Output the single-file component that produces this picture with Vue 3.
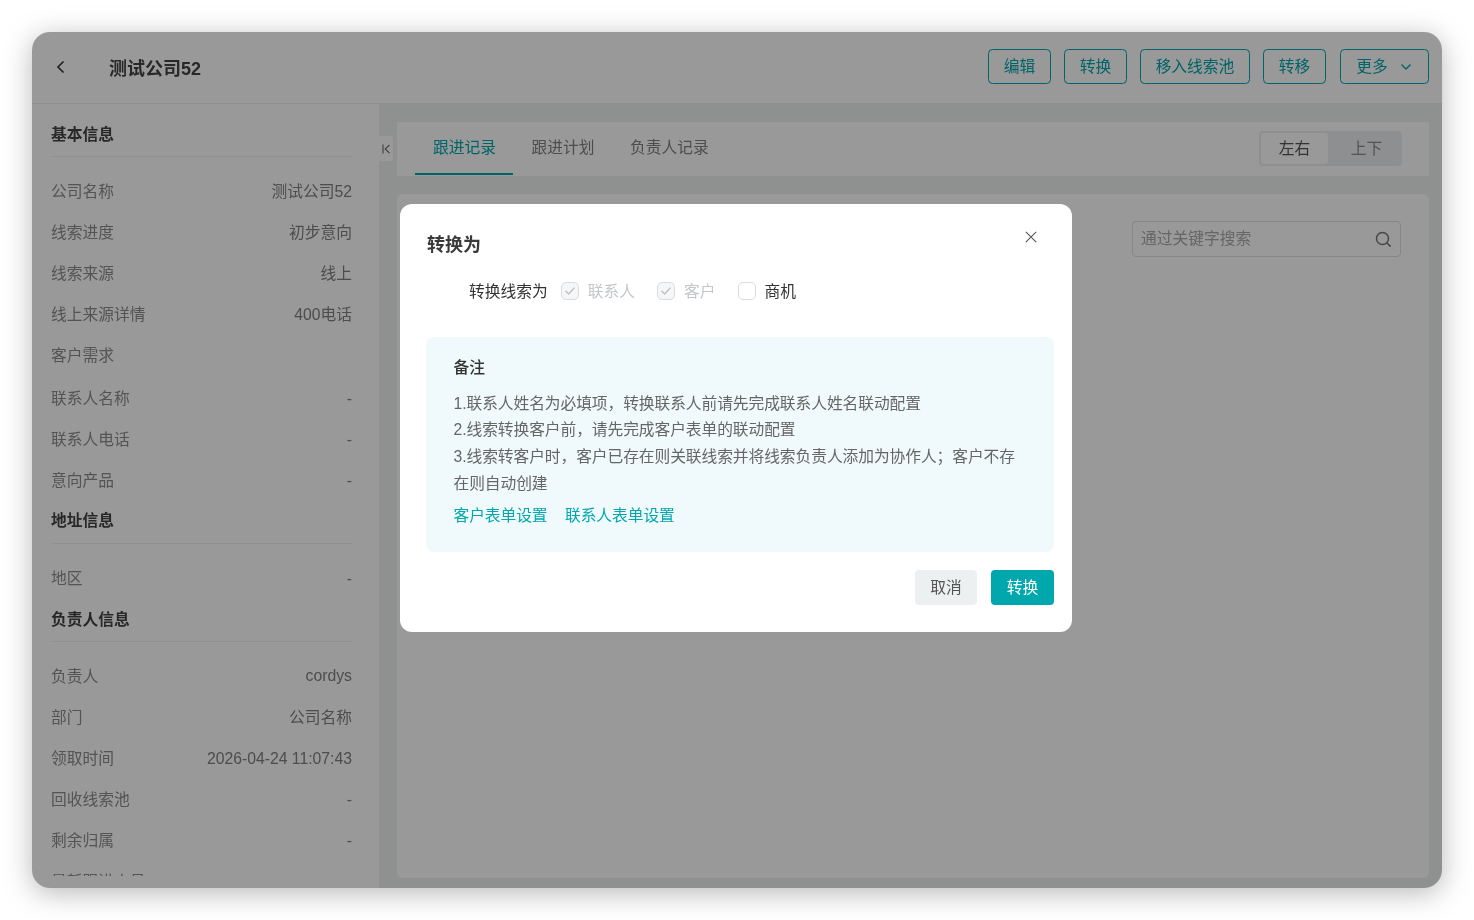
<script setup>
const sections = [
  { title: '基本信息', rows: [
    ['公司名称', '测试公司52'], ['线索进度', '初步意向'], ['线索来源', '线上'], ['线上来源详情', '400电话'],
    ['客户需求', '', true], ['联系人名称', '-'], ['联系人电话', '-'], ['意向产品', '-'] ] },
  { title: '地址信息', rows: [['地区', '-']] },
  { title: '负责人信息', rows: [
    ['负责人', 'cordys'], ['部门', '公司名称'], ['领取时间', '2026-04-24 11:07:43'], ['回收线索池', '-'], ['剩余归属', '-'], ['最新跟进人员', ''] ] }
]
const actions = ['编辑', '转换', '移入线索池', '转移']
const tabs = ['跟进记录', '跟进计划', '负责人记录']
const checks = [
  { label: '联系人', checked: true, disabled: true },
  { label: '客户', checked: true, disabled: true },
  { label: '商机', checked: false, disabled: false }
]
const notes = [
  '1.联系人姓名为必填项，转换联系人前请先完成联系人姓名联动配置',
  '2.线索转换客户前，请先完成客户表单的联动配置',
  '3.线索转客户时，客户已存在则关联线索并将线索负责人添加为协作人；客户不存在则自动创建'
]
const isLatin = (v) => /^[-\d: ]+$/.test(v)
</script>

<template>
  <div class="page">
    <div class="window">
      <header class="header">
        <svg class="back" width="10" height="16" viewBox="0 0 10 16" fill="none"><path d="M7.5 2.5 2 8l5.5 5.5" stroke="#3a3a3a" stroke-width="1.7"/></svg>
        <h1 class="name">测试公司52</h1>
        <div class="actions">
          <button v-for="a in actions" :key="a" class="ghost"><span class="cap">{{ a }}</span></button>
          <button class="ghost more"><span class="cap">更多</span>
            <svg width="12" height="8" viewBox="0 0 12 8" fill="none"><path d="M1.5 1.5 6 6l4.5-4.5" stroke="#00a7ad" stroke-width="1.4"/></svg>
          </button>
        </div>
      </header>
      <div class="content">
        <aside class="side">
          <div class="side-scroll">
            <section v-for="s in sections" :key="s.title">
              <div class="sec-title">{{ s.title }}</div>
              <div v-for="r in s.rows" :key="r[0]" class="row" :class="{ tall: r[2] }">
                <span class="lbl">{{ r[0] }}</span>
                <span class="val" :class="{ latin: isLatin(r[1]) }">{{ r[1] }}</span>
              </div>
            </section>
          </div>
        </aside>
        <main class="main">
          <div class="collapse">
            <svg width="9" height="10" viewBox="0 0 9 10" fill="none"><path d="M1 .5v9M7.5 .8 3.2 5l4.3 4.2" stroke="#666" stroke-width="1.1"/></svg>
          </div>
          <div class="tabbar">
            <div class="tabs">
              <div v-for="(t, i) in tabs" :key="t" class="tab" :class="{ active: i === 0 }">{{ t }}</div>
            </div>
            <div class="seg">
              <div class="seg-item on">左右</div>
              <div class="seg-item">上下</div>
            </div>
          </div>
          <div class="panel">
            <div class="search">
              <span class="ph">通过关键字搜索</span>
              <svg width="17" height="17" viewBox="0 0 17 17" fill="none"><circle cx="7.5" cy="7.5" r="6" stroke="#777" stroke-width="1.5"/><path d="m11.8 11.8 3.8 3.8" stroke="#777" stroke-width="1.5"/></svg>
            </div>
          </div>
        </main>
      </div>

      <div class="mask">
        <div class="modal">
          <svg class="close" width="12" height="12" viewBox="0 0 12 12" fill="none"><path d="m.8.8 10.4 10.4M11.2.8.8 11.2" stroke="#555" stroke-width="1.1"/></svg>
          <h2 class="m-title">转换为</h2>
          <div class="m-form">
            <span class="m-label">转换线索为</span>
            <label v-for="c in checks" :key="c.label" class="check" :class="{ off: c.disabled }">
              <span class="box">
                <svg v-if="c.checked" width="12" height="10" viewBox="0 0 12 10" fill="none"><path d="m1.5 5 3.2 3 5.8-6.3" stroke="#b5b8bd" stroke-width="1.2"/></svg>
              </span>
              <span class="check-text">{{ c.label }}</span>
            </label>
          </div>
          <div class="note">
            <div class="note-title">备注</div>
            <p v-for="n in notes" :key="n" class="note-line">{{ n }}</p>
            <div class="links"><span>客户表单设置</span><span>联系人表单设置</span></div>
          </div>
          <div class="m-foot">
            <button class="btn cancel"><span class="cap">取消</span></button>
            <button class="btn primary"><span class="cap">转换</span></button>
          </div>
        </div>
      </div>
    </div>
  </div>
</template>

<style>
html, body { margin: 0; background: #fff; }
</style>

<style scoped>
.page {
  width: 1474px; height: 920px; box-sizing: border-box; padding: 32px;
  font-family: "Liberation Sans", "Noto Sans CJK SC", sans-serif; font-size: 15.75px; color: #333;
  overflow: hidden;
  filter: drop-shadow(0 5px 14px rgba(0,0,0,.28));
}
.window {
  position: relative; height: 856px; background: #fff; border-radius: 18px; overflow: hidden;
  display: flex; flex-direction: column;
}
.header {
  height: 71px; flex: none; display: flex; align-items: center; padding: 0 13px 0 23.5px;
  border-bottom: 1px solid #ecedef;
}
.back { margin-top: -2px; }
.name { margin: 2px 0 0 43.5px; font-size: 18px; font-weight: 700; line-height: 24px; color: #444; }
.actions { margin-left: auto; display: flex; gap: 13px; margin-top: -2px; }
button { font: inherit; cursor: pointer; }
.cap { display: block; margin-top: -2px; }
.ghost {
  height: 35.5px; width: 63px; padding: 0; box-sizing: border-box; background: #fff; color: #00a7ad;
  border: 1.1px solid #00a7ad; border-radius: 4.5px; display: flex; align-items: center; justify-content: center; white-space: nowrap;
}
.ghost:nth-child(3) { width: 110px; }
.ghost.more { width: 89px; gap: 12px; padding-right: 1px; margin-left: 1px; }
.content { flex: 1; min-height: 0; display: flex; }
.side { width: 347px; flex: none; box-sizing: border-box; padding: 0 27px 12px 19px; overflow: hidden; }
.side-scroll { height: 100%; overflow: hidden; padding-top: 10px; box-sizing: border-box; }
.sec-title {
  padding: 9px 0 9px; line-height: 24px; font-weight: 700; color: #444; border-bottom: 1px solid #eceef0;
  margin-bottom: 13px;
}
.row { height: 41px; display: flex; justify-content: space-between; align-items: center; }
.row.tall { height: 43px; align-items: flex-start; padding-top: 9px; box-sizing: border-box; }
section:nth-child(2) .sec-title { margin-top: 9px; padding: 0 0 10px; }
section:nth-child(3) .sec-title { margin-top: 10px; padding: 0 0 9px; }
.lbl { color: #8c8c8c; }
.val { color: #808080; }
.val.latin { margin-top: 2px; }
.main {
  position: relative; flex: 1; min-width: 0; background: #eff0f1; padding: 18px 13px 10px 18px;
  box-sizing: border-box; display: flex; flex-direction: column; gap: 18px;
}
.collapse {
  position: absolute; left: 0; top: 32px; width: 14px; height: 25px; background: #fff;
  border-radius: 0 3px 3px 0; display: flex; align-items: center; justify-content: center;
}
.tabbar { height: 54px; flex: none; background: #fff; display: flex; align-items: center; padding: 0 27px 0 18.25px; }
.tabs { display: flex; height: 100%; }
.tab {
  position: relative; padding: 0 17.75px 5px; height: 100%; box-sizing: border-box;
  display: flex; align-items: center; color: #808080;
}
.tab.active { color: #00a7ad; }
.tab.active::after { content: ""; position: absolute; left: 0; right: .5px; bottom: 1px; height: 2px; background: #00a7ad; }
.seg { margin-left: auto; margin-top: -1px; display: flex; width: 143px; height: 35px; box-sizing: border-box; padding: 2px; background: #eceef0; border-radius: 4px; }
.seg-item { width: 72px; display: flex; align-items: center; justify-content: center; color: #8c8c8c; padding: 0 0 3px 5px; box-sizing: border-box; }
.seg-item.on { width: 67px; background: #fff; color: #555; border-radius: 3px; padding-left: 0; }
.panel { flex: 1; background: #fff; border-radius: 6px; padding: 27px 28px 0 0; display: flex; justify-content: flex-end; align-items: flex-start; }
.search {
  width: 269px; height: 36px; box-sizing: border-box; border: 1px solid #dcdfe3; border-radius: 4px;
  display: flex; align-items: center; justify-content: space-between; padding: 0 8px 0 8px;
}
.ph { color: #aaa; margin-top: -3px; }
.mask { position: absolute; inset: 0; background: rgba(0,0,0,.4); }
.modal {
  position: absolute; left: 368px; top: 172px; width: 672px; height: 428px; box-sizing: border-box;
  background: #fff; border-radius: 12px; padding: 29px 18px 27px 26px;
}
.close { position: absolute; right: 35px; top: 27px; }
.m-title { margin: 0 0 22px 1px; font-size: 18px; line-height: 24px; font-weight: 700; color: #3a3a3a; }
.m-form { display: flex; align-items: center; height: 24px; padding-left: 43px; margin-bottom: 34px; color: #333; }
.m-label, .check-text { margin-top: -2px; }
.m-label { margin-right: 13px; }
.check { display: flex; align-items: center; gap: 9px; margin-right: 22px; }
.check.off { color: #c4c6ca; }
.box {
  width: 18px; height: 18px; box-sizing: border-box; border: 1px solid #d9dbdf; border-radius: 5px;
  display: flex; align-items: center; justify-content: center;
}
.check.off .box { background: #f5f6f7; }
.note { height: 215px; box-sizing: border-box; background: #f0fafc; border-radius: 8px; padding: 19px 27px 0 27.5px; color: #666; letter-spacing: -.08px; }
.note-title { line-height: 24px; font-weight: 500; color: #333; margin-bottom: 10.5px; }
.note-line { margin: 0; line-height: 26.75px; }
.links { margin-top: 5px; line-height: 26px; color: #00a7ad; display: flex; gap: 17.5px; }
.m-foot { display: flex; justify-content: flex-end; gap: 14px; margin-top: 18px; }
.btn { width: 63px; height: 35px; border: 0; border-radius: 4px; padding: 0; }
.cancel { width: 62px; background: #edf0f1; color: #555; }
.primary { background: #00a7ad; color: #fff; }
</style>
